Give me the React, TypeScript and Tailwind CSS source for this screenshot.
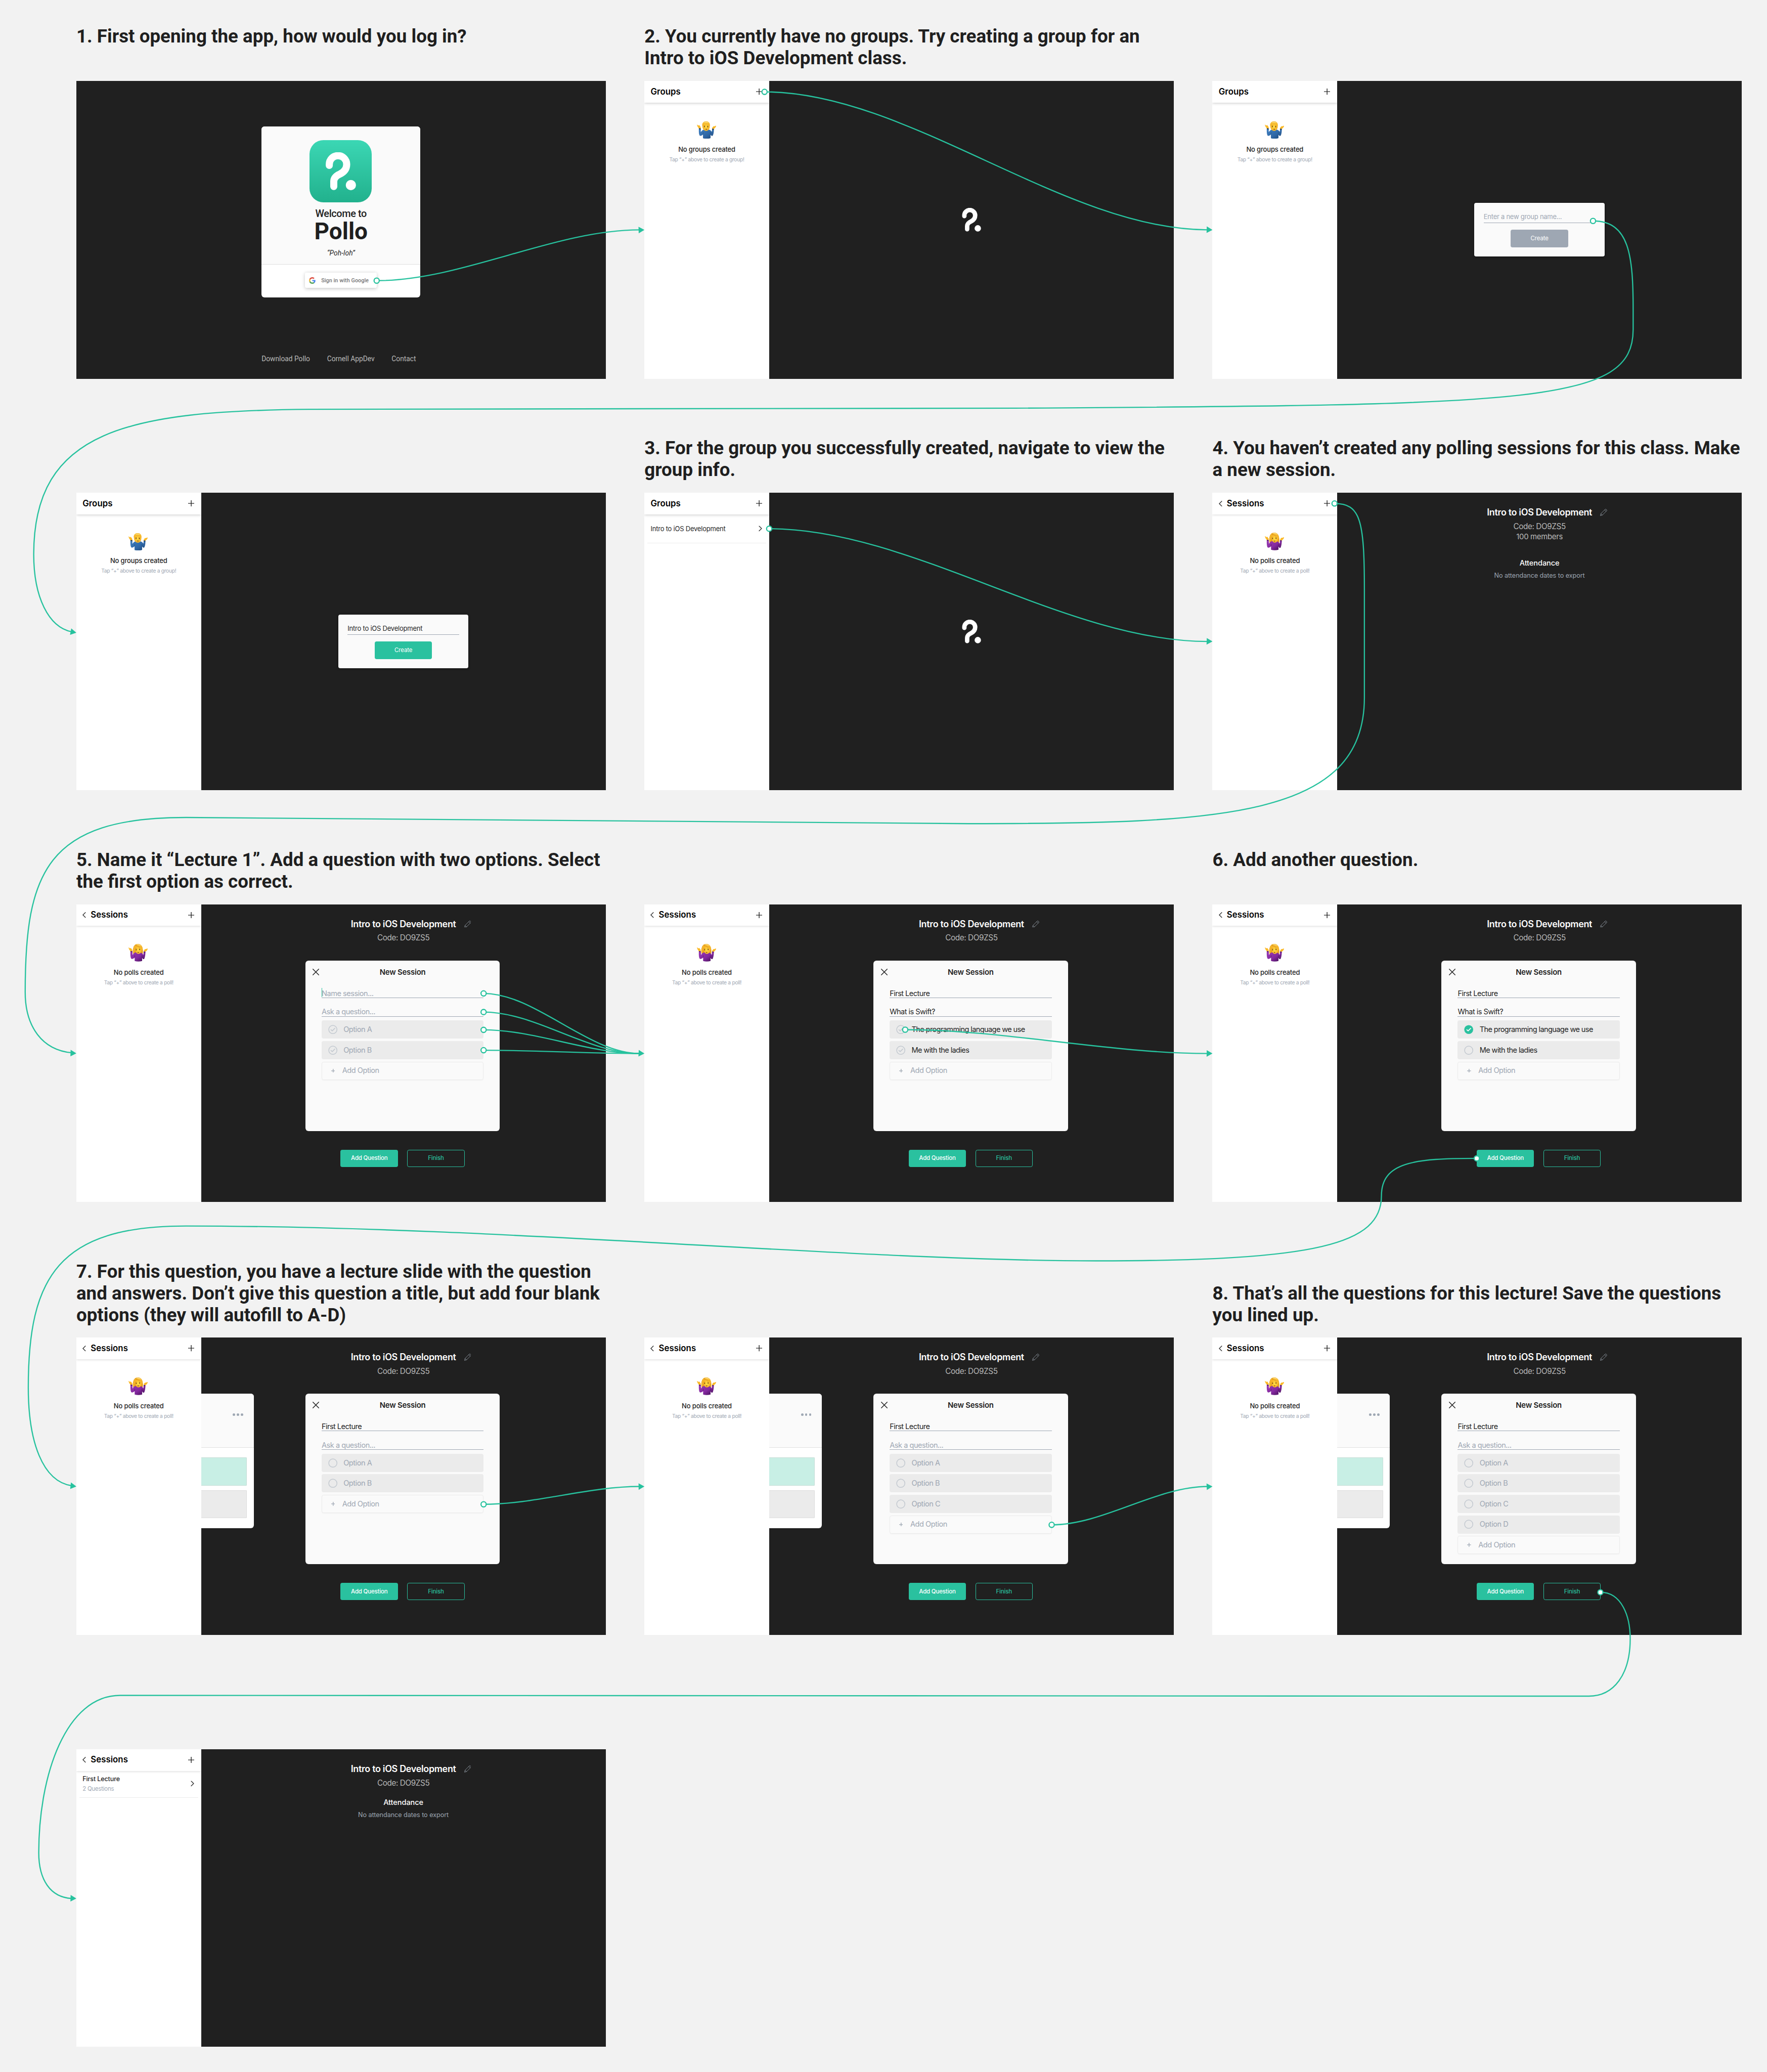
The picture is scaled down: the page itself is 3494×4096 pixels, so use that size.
import React from "react";

/* ---------- icons ---------- */

function PolloMark({ className }: { className: string }) {
  return (
    <svg viewBox="41 31.3 78.4 98" className={className} fill="none">
      <path
        d="M50.3 65.3V62.6A22.4 22.4 0 0 1 95.2 62.3C95.2 76 86.5 83.5 77 87.8C67 92.3 61.9 98.5 61.9 107V119.8"
        stroke="#fff"
        strokeWidth="18.3"
        strokeLinecap="round"
      />
      <circle cx="106" cy="116" r="13.2" fill="#fff" />
    </svg>
  );
}

function GoogleIcon() {
  return (
    <svg viewBox="0 0 48 48" className="h-[17px] w-[17px]">
      <path fill="#DB4C3F" d="M24 9.5c3.54 0 6.71 1.22 9.21 3.6l6.85-6.85C35.9 2.38 30.47 0 24 0 14.62 0 6.51 5.38 2.56 13.22l7.98 6.19C12.43 13.72 17.74 9.5 24 9.5z" />
      <path fill="#4A86EE" d="M46.98 24.55c0-1.57-.15-3.09-.38-4.55H24v9.02h12.94c-.58 2.96-2.26 5.48-4.78 7.18l7.73 6c4.51-4.18 7.09-10.36 7.09-17.65z" />
      <path fill="#F2BE42" d="M10.53 28.59c-.48-1.45-.76-2.99-.76-4.59s.27-3.14.76-4.59l-7.98-6.19C.92 16.46 0 20.12 0 24c0 3.88.92 7.54 2.56 10.78l7.97-6.19z" />
      <path fill="#58A55C" d="M24 48c6.48 0 11.93-2.13 15.89-5.81l-7.73-6c-2.15 1.45-4.92 2.3-8.16 2.3-6.26 0-11.57-4.22-13.47-9.91l-7.98 6.19C6.51 42.62 14.62 48 24 48z" />
    </svg>
  );
}

function Plus({ className }: { className: string }) {
  return (
    <svg viewBox="0 0 16 16" className={className} stroke="currentColor" strokeWidth="1.9">
      <path d="M8 0V16M0 8H16" />
    </svg>
  );
}

function Chevron({ className }: { className: string }) {
  return (
    <svg viewBox="0 0 9 15" className={className} fill="none" stroke="#333" strokeWidth="1.9">
      <path d="M8.2 0.7L1.3 7.5L8.2 14.3" />
    </svg>
  );
}

function Cross() {
  return (
    <svg viewBox="0 0 17 17" className="h-[17px] w-[17px]" stroke="#1f1f1f" strokeWidth="1.9" strokeLinecap="round">
      <path d="M1 1L16 16M16 1L1 16" />
    </svg>
  );
}

function Pencil() {
  return (
    <svg viewBox="0 0 18 18" className="h-[18px] w-[18px]" fill="none" stroke="#9ea7b3" strokeWidth="1" strokeLinejoin="round">
      <path d="M0.6 17.4L2 12.2L13.2 1A1.6 1.6 0 0 1 15.4 1L17 2.6A1.6 1.6 0 0 1 17 4.8L5.8 16Z" />
      <path d="M2 12.2L5.8 16M11.6 2.6L15.4 6.4" />
    </svg>
  );
}

function Radio({ state }: { state: "empty" | "hint" | "on" }) {
  return (
    <svg viewBox="0 0 24 24" className="h-6 w-6" fill="none" strokeLinecap="round" strokeLinejoin="round">
      {state === "on" ? (
        <circle cx="12" cy="12" r="11.5" fill="#2ac19f" />
      ) : (
        <circle cx="12" cy="12" r="10.6" stroke="#c3c9d0" strokeWidth="1.9" />
      )}
      {state !== "empty" && (
        <path d="M7.2 12.6L10.4 15.6L17 9" stroke={state === "on" ? "#fff" : "#c3c9d0"} strokeWidth="2.2" />
      )}
    </svg>
  );
}

function ShrugMan() {
  return (
    <svg viewBox="0 0 150 136" className="h-[45px] w-[50px]">
      <defs>
        <linearGradient id="manShirt" x1="0" x2="1" y1="0" y2="1">
          <stop offset="0" stopColor="#3f80c2" />
          <stop offset="0.6" stopColor="#2f67a5" />
          <stop offset="1" stopColor="#1c4676" />
        </linearGradient>
        <radialGradient id="manFace" cx="0.5" cy="0.55" r="0.6">
          <stop offset="0" stopColor="#ffdc45" />
          <stop offset="1" stopColor="#f2a51c" />
        </radialGradient>
      </defs>
      <path d="M0 26C4 25 8 31 12 34C13 30 15 28 18 29L25 38C30 43 31 48 29 55L17 56C8 48 2 38 0 26Z" fill="#fbb927" />
      <path d="M150 35C146 34 139 36 135 39C133 36 128 38 125 42C119 47 118 52 119 57L131 59C141 53 148 45 150 35Z" fill="#fbb927" />
      <path d="M15 55L30 56L30 84C36 73 44 66 55 64H92C103 66 110 72 116 82L119 57L132 60C132 80 130 98 124 109C120 116 112 114 106 104V130Q76 140 47 131V102C38 112 28 116 21 110C14 98 14 75 15 55Z" fill="url(#manShirt)" />
      <path d="M47 102L49 84M106 104L104 84" stroke="#1d4472" strokeWidth="2" fill="none" />
      <path d="M15 53L30 55V62L15 60ZM119 56L132 58L131 65L118 63Z" fill="#24364c" />
      <path d="M42 36C42 12 52 1 71 1C91 1 101 12 100 38C100 60 88 74 72 74C55 74 42 58 42 36Z" fill="url(#manFace)" />
      <path d="M41 34C38 12 52 0 71 0C92 0 105 13 100 38C97 32 97 27 94 22C80 28 60 28 49 22C45 25 44 30 41 34Z" fill="#f6bb30" />
      <path d="M50 12C60 4 84 3 93 13C80 9 62 9 50 12Z" fill="#fff0a0" />
      <path d="M54 35L64 33M79 34L89 37" stroke="#a8640d" strokeWidth="3" />
      <ellipse cx="59" cy="41" rx="3.4" ry="4.6" fill="#4b2a0c" />
      <ellipse cx="84" cy="42" rx="3.4" ry="4.6" fill="#4b2a0c" />
      <path d="M64 60Q73 55 81 61Q73 66 64 60Z" fill="#5a240c" />
    </svg>
  );
}

function ShrugWoman() {
  return (
    <svg viewBox="0 0 150 139" className="h-[46px] w-[50px]">
      <defs>
        <linearGradient id="womanShirt" x1="0" x2="1" y1="0" y2="1">
          <stop offset="0" stopColor="#9a3bb4" />
          <stop offset="0.55" stopColor="#84299f" />
          <stop offset="1" stopColor="#3a0b4c" />
        </linearGradient>
        <radialGradient id="womanFace" cx="0.5" cy="0.55" r="0.6">
          <stop offset="0" stopColor="#ffdc45" />
          <stop offset="1" stopColor="#f6ae22" />
        </radialGradient>
      </defs>
      <path d="M36 76C30 50 34 0 72 0C110 0 116 46 111 76L96 84H50Z" fill="#e59e1e" />
      <path d="M0 28C4 27 8 33 12 36C13 32 15 31 18 32L25 40C30 45 31 50 29 57L17 59C8 50 2 40 0 28Z" fill="#fbb927" />
      <path d="M150 37C146 36 139 38 135 41C133 38 128 40 125 44C119 49 118 54 119 59L131 61C141 55 148 47 150 37Z" fill="#fbb927" />
      <path d="M15 57L30 58L32 88C36 76 44 68 55 66H92C103 68 110 76 116 86L118 60L132 62C132 84 128 104 123 115C118 122 111 118 106 108V133Q76 142 48 133V106C40 116 28 121 20 113C14 100 14 77 15 57Z" fill="url(#womanShirt)" />
      <path d="M48 106L49 88M106 108L104 88" stroke="#430c58" strokeWidth="2" fill="none" />
      <path d="M15 56L30 58V64L15 62ZM118 59L132 61L131 67L118 65Z" fill="#4a1660" />
      <path d="M52 40C52 18 58 10 76 10C94 10 103 22 103 44C103 64 92 77 78 77C62 77 52 60 52 40Z" fill="url(#womanFace)" />
      <path d="M37 72C34 34 40 1 73 1C104 1 113 26 110 58C106 38 92 28 77 22C70 18 62 12 54 7C60 24 50 30 49 44C48 58 46 70 37 72Z" fill="#f5b52c" />
      <path d="M58 4C74 0 94 6 101 18C88 10 72 8 58 4Z" fill="#ffeb95" />
      <path d="M54 7C60 14 74 21 88 28" stroke="#b87412" strokeWidth="2" fill="none" />
      <ellipse cx="60" cy="46" rx="3.4" ry="4.6" fill="#4b2a0c" />
      <ellipse cx="87" cy="44" rx="3.4" ry="4.6" fill="#4b2a0c" />
      <path d="M55 38L64 36M81 35L91 37" stroke="#b06f10" strokeWidth="2.6" />
      <path d="M68 66Q76 60 83 65Q76 71 68 66Z" fill="#5a240c" />
    </svg>
  );
}

/* ---------- sidebar ---------- */

type SidebarKind = "groups-empty" | "groups-list" | "polls-empty" | "polls-list";

function Sidebar({ kind }: { kind: SidebarKind }) {
  const groups = kind === "groups-empty" || kind === "groups-list";
  return (
    <aside className="flex w-[322px] shrink-0 flex-col overflow-hidden bg-white">
      <header
        className={
          groups
            ? "flex h-14 shrink-0 items-center justify-between pr-[18px] pl-4 shadow-[0_1px_8px_rgba(0,0,0,0.28)]"
            : "flex h-14 shrink-0 items-center justify-between pr-[18px] pl-4 shadow-[0_1px_6px_rgba(0,0,0,0.15)]"
        }
      >
        <div className="flex items-center gap-3">
          {!groups && <Chevron className="h-[15px] w-[9px]" />}
          <h2 className="text-[22px] leading-7 font-semibold text-black">{groups ? "Groups" : "Sessions"}</h2>
        </div>
        <Plus className="h-4 w-4 text-[#2b2b2b]" />
      </header>

      {(kind === "groups-empty" || kind === "polls-empty") && (
        <div className="flex flex-col items-center pt-[47px]">
          <div className="flex h-[46px] items-end pr-[2px]">{groups ? <ShrugMan /> : <ShrugWoman />}</div>
          <p className="mt-[15px] text-[17px] leading-6 font-medium tracking-[-0.22px] text-[#1f1f1f]">
            {groups ? "No groups created" : "No polls created"}
          </p>
          <p className="mt-[6px] text-[13.5px] leading-[18px] tracking-[-0.44px] text-[#9ea7b3]">
            {groups ? "Tap “+” above to create a group!" : "Tap “+” above to create a poll!"}
          </p>
        </div>
      )}

      {kind === "groups-list" && (
        <div className="mx-2 flex h-[75px] items-center justify-between border-b border-[#ebebeb] pr-[10px] pl-2">
          <p className="text-[17px] leading-6 tracking-[-0.3px] text-[#1f1f1f]">Intro to iOS Development</p>
          <Chevron className="h-[15px] w-[9px] rotate-180" />
        </div>
      )}

      {kind === "polls-list" && (
        <div className="mx-2 flex h-[70px] justify-between border-b border-[#ebebeb] pr-[10px] pl-2">
          <div className="pt-[10px]">
            <p className="text-[16.5px] leading-6 font-medium tracking-[-0.2px] text-[#1f1f1f]">First Lecture</p>
            <p className="mt-[3px] text-[15px] leading-5 tracking-[-0.33px] text-[#9ea7b3]">2 Questions</p>
          </div>
          <Chevron className="mt-[25px] h-[15px] w-[9px] rotate-180" />
        </div>
      )}
    </aside>
  );
}

/* ---------- main panes ---------- */

function GroupHeading({ members }: { members?: boolean }) {
  return (
    <div className="flex w-full flex-col items-center pt-[37px]">
      <div className="relative">
        <h3 className="text-[23.5px] leading-[30px] font-semibold tracking-[-0.46px] text-white">Intro to iOS Development</h3>
        <span className="absolute top-[5px] -right-[39px]">
          <Pencil />
        </span>
      </div>
      <p className="mt-[6px] text-[20px] leading-7 tracking-[-0.55px] text-[#b9b9b9]">Code: DO9ZS5</p>
      {members && <p className="text-[19.5px] leading-7 tracking-[-0.44px] text-[#b9b9b9]">100 members</p>}
    </div>
  );
}

function Attendance({ className }: { className: string }) {
  return (
    <div className={className}>
      <p className="text-[19px] leading-6 font-medium tracking-[-0.1px] text-white">Attendance</p>
      <p className="mt-2 text-[16.5px] leading-6 tracking-[-0.07px] text-[#9ea7b3]">No attendance dates to export</p>
    </div>
  );
}

function CreateGroup({ name }: { name?: string }) {
  return (
    <div className="flex h-[138px] w-[336px] flex-col items-center rounded-[5px] bg-[#fafafa] px-6 pt-[20px] shadow-[0_1px_6px_rgba(0,0,0,0.5)]">
      <div className="h-[32px] w-full border-b border-[#9ea7b3]">
        {name ? (
          <p className="text-[17px] leading-[30px] tracking-[-0.3px] text-[#1f1f1f]">{name}</p>
        ) : (
          <p className="text-[17px] leading-[30px] tracking-[-0.35px] text-[#9ea7b3]">Enter a new group name...</p>
        )}
      </div>
      <div
        className={
          name
            ? "mt-[17px] flex h-[45px] w-[148px] items-center justify-center rounded-[5px] bg-[#2ac19f] text-[15px] tracking-[-0.15px] text-white"
            : "mt-[17px] flex h-[45px] w-[148px] items-center justify-center rounded-[5px] bg-[#9ea7b3] text-[15px] tracking-[-0.15px] text-white"
        }
      >
        Create
      </div>
    </div>
  );
}

type Option = { text: string; filled?: boolean; radio: "empty" | "hint" | "on" };

function Field({ value, placeholder, caret, className }: { value?: string; placeholder: string; caret?: boolean; className: string }) {
  return (
    <div className={className}>
      {caret && <span className="absolute -top-[2px] left-0 h-[24px] w-[2px] bg-[#2ac19f]" />}
      {value ? (
        <p className="text-[19px] leading-[24px] tracking-[-0.7px] text-[#1f1f1f]">{value}</p>
      ) : (
        <p className="text-[19px] leading-[24px] tracking-[-0.6px] text-[#9ea7b3]">{placeholder}</p>
      )}
    </div>
  );
}

function SessionCard({ session, question, caret, options }: { session?: string; question?: string; caret?: boolean; options: Option[] }) {
  return (
    <section className="flex h-[440px] w-[502px] shrink-0 flex-col rounded-lg bg-[#fafafa]">
      <div className="grid h-[60px] grid-cols-[60px_1fr_60px] items-center">
        <span className="pl-[19px]">
          <Cross />
        </span>
        <h4 className="pt-[1px] text-center text-[19.5px] leading-6 font-semibold tracking-[-0.3px] text-[#1f1f1f]">New Session</h4>
      </div>
      <div className="flex flex-col px-[42px] pt-[13px]">
        <Field value={session} placeholder="Name session..." caret={caret} className="relative h-[24px] border-b border-[#9ea7b3]" />
        <Field value={question} placeholder="Ask a question..." className="relative mt-6 h-[24px] border-b border-[#9ea7b3]" />
        <div className="mt-[10px] flex flex-col gap-[6px]">
          {options.map((o) => (
            <div key={o.text} className="flex h-[47px] items-center gap-[16px] rounded-[5px] bg-[#ebebeb] pl-[16.5px]">
              <Radio state={o.radio} />
              <p className={o.filled ? "text-[19px] leading-6 tracking-[-0.8px] text-[#1f1f1f]" : "text-[19px] leading-6 tracking-[-0.6px] text-[#9ea7b3]"}>
                {o.text}
              </p>
            </div>
          ))}
          <div className="flex h-[47px] items-center gap-[19px] rounded-[5px] border border-[#ebebeb] pl-[23px] shadow-[0_1px_2px_rgba(0,0,0,0.04)]">
            <Plus className="h-[10px] w-[10px] text-[#9ea7b3] stroke-[2.8]" />
            <p className="text-[19px] leading-6 tracking-[-0.6px] text-[#9ea7b3]">Add Option</p>
          </div>
        </div>
      </div>
    </section>
  );
}

function PreviousQuestion() {
  return (
    <section className="mr-[133px] h-[347px] w-[136px] overflow-hidden rounded-r-lg bg-white">
      <div className="flex h-[139px] justify-end gap-[4px] border-b border-[#dfdfdf] bg-[#fafafa] pt-[51px] pr-[27px]">
        <span className="h-[6.4px] w-[6.4px] rounded-full bg-[#9ea7b3]" />
        <span className="h-[6.4px] w-[6.4px] rounded-full bg-[#9ea7b3]" />
        <span className="h-[6.4px] w-[6.4px] rounded-full bg-[#9ea7b3]" />
      </div>
      <div className="flex flex-col gap-[12px] pt-[26px] pr-[18px]">
        <div className="h-[72px] rounded-r-[2px] border border-l-0 border-[#c6ddd6] bg-[#c8efe5]" />
        <div className="h-[72px] rounded-r-[2px] border border-l-0 border-[#dcdcdc] bg-[#ebebeb]" />
      </div>
    </section>
  );
}

function SessionPane({ previous, ...card }: { previous?: boolean; session?: string; question?: string; caret?: boolean; options: Option[] }) {
  return (
    <main className="flex w-[1044px] flex-col bg-[#202020]">
      <GroupHeading />
      <div className={previous ? "mt-[44px] flex h-[440px] items-start" : "mt-[44px] flex h-[440px] items-start pl-[269px]"}>
        {previous && <PreviousQuestion />}
        <SessionCard {...card} />
      </div>
      <div className="mt-12 flex gap-6 pl-[360px] text-[15px] font-medium tracking-[-0.25px]">
        <div className="flex h-[45px] w-[148px] items-center justify-center rounded-[5px] bg-[#2ac19f] text-white">Add Question</div>
        <div className="flex h-[45px] w-[148px] items-center justify-center rounded-[5px] border-[1.5px] border-[#2ac19f] text-[#2ac19f]">Finish</div>
      </div>
    </main>
  );
}

function CenteredPane({ children }: { children: React.ReactNode }) {
  return <main className="flex w-[1044px] items-center justify-center bg-[#202020]">{children}</main>;
}

function Login() {
  return (
    <main className="flex w-full flex-col bg-[#202020] font-['Roboto',sans-serif]">
      <section className="mt-[117px] ml-[478px] flex h-[441px] w-[410px] flex-col overflow-hidden rounded-lg bg-white">
        <div className="flex h-[356px] flex-col items-center border-b border-[#dedede] bg-[#fafafa] pt-[36px] text-[#1f1f1f]">
          <div className="mr-[2px] flex h-[160px] w-[160px] shrink-0 rounded-[36px] bg-linear-to-b from-[#3bd7b4] to-[#21b18d] pt-[31.3px] pl-[41px]">
            <PolloMark className="h-[98px] w-[78.4px]" />
          </div>
          <p className="mt-[15px] text-[26px] leading-[30px] font-medium tracking-[-0.5px]">Welcome to</p>
          <h1 className="text-[60px] leading-[62px] font-bold">Pollo</h1>
          <p className="mt-[12px] text-[18px] leading-6 tracking-[0.15px] italic">“Poh-loh”</p>
        </div>
        <div className="flex justify-center pt-[22px]">
          <div className="flex h-[39px] w-[185px] items-center gap-[14.5px] rounded-[4px] bg-white pl-[10px] shadow-[0_2px_10px_rgba(0,0,0,0.22)]">
            <GoogleIcon />
            <span className="text-[14px] leading-5 font-medium tracking-[0.12px] whitespace-nowrap text-[#757575]">Sign in with Google</span>
          </div>
        </div>
      </section>
      <footer className="mt-[147px] flex gap-[44px] pl-[478px] text-[18px] leading-6 text-[#bababa]">
        <span>Download Pollo</span>
        <span>Cornell AppDev</span>
        <span>Contact</span>
      </footer>
    </main>
  );
}

/* ---------- storyboard ---------- */

function Step({ lines, className, children }: { lines?: string[]; className: string; children: React.ReactNode }) {
  return (
    <article className="flex w-[1366px] flex-col justify-end">
      <div className={className}>
        {lines && (
          <h2 className="relative top-px min-h-[112px] font-['Roboto',sans-serif] text-[48px] leading-[56.25px] font-bold whitespace-nowrap text-[#1f1f1f]">
            {lines.map((l) => (
              <span key={l} className="block">
                {l}
              </span>
            ))}
          </h2>
        )}
      </div>
      <div className="flex h-[768px] w-[1366px] overflow-hidden">{children}</div>
    </article>
  );
}

const blank = (letters: string[], radio: "empty" | "hint" = "empty"): Option[] => letters.map((l) => ({ text: `Option ${l}`, radio }));

/* ---------- connectors ---------- */

const easy = (x1: number, y1: number, x2: number, y2: number) => {
  const h = (x2 - x1) * 0.32;
  return `M${x1} ${y1}C${x1 + h} ${y1} ${x2 - 12 - h} ${y2} ${x2 - 12} ${y2}`;
};

const paths = [
  easy(972, 724, 1663, 593),
  easy(1973, 237, 3129, 593),
  "M4111 570C4205 570 4214.6 660 4214.6 800V850C4214.6 1040 3960 1045 2620 1053C2000 1056 1400 1056 800 1056C330 1060 87 1110 87 1430C87 1540 125 1618 185 1630",
  easy(1985, 1364, 3129, 1655),
  "M3444 1299C3510 1299 3521 1340 3521 1520V1800C3521 2110 3150 2125 2500 2125C1800 2125 1100 2109 480 2109C120 2109 65 2250 65 2560C65 2650 110 2709 185 2716",
  easy(1248, 2563, 1663, 2718),
  easy(1248, 2611, 1663, 2718),
  easy(1248, 2657, 1663, 2718),
  easy(1248, 2709.5, 1663, 2718),
  easy(2336, 2656.5, 3129, 2718),
  "M3811 2988.5C3650 2988.5 3565 2998 3565 3085C3565 3210 3400 3253 2830 3253C2200 3253 1300 3163 480 3163C150 3163 73 3295 73 3580C73 3720 110 3822 185 3833",
  easy(1248, 3881, 1663, 3835),
  easy(2714, 3934, 3129, 3835),
  "M4130 4108C4185 4108 4207 4170 4207 4228C4207 4320 4165 4376 4100 4376L310 4374C170 4374 100 4580 100 4780C100 4850 130 4895 185 4898",
];

const nodes = [
  [972, 724], [1973, 237], [4111, 570], [1985, 1364], [3444, 1299], [1248, 2563], [1248, 2611], [1248, 2657],
  [1248, 2709.5], [2336, 2656.5], [3811, 2988.5], [1248, 3881], [2714, 3934], [4130, 4108],
];

const arrows = [
  [1663, 593, -2], [3129, 593, 2], [197, 1632.5, 11], [3129, 1655, 2], [197, 2717.5, 2], [1663, 2718, 3],
  [3129, 2718, 1], [197, 3835, 7], [1663, 3835, -1], [3129, 3835, -3], [197, 4898, 2],
];

function Connectors() {
  return (
    <svg viewBox="0 0 4560 5346" className="pointer-events-none absolute top-0 left-0 h-[5346px] w-[4560px]" fill="none">
      {paths.map((d) => (
        <path key={d} d={d} stroke="#27c29e" strokeWidth="3.1" />
      ))}
      {arrows.map(([x, y, a]) => (
        <path key={`${x}-${y}`} d="M0 0L-15 -8.5V8.5Z" fill="#27c29e" transform={`translate(${x} ${y}) rotate(${a})`} />
      ))}
      {nodes.map(([x, y]) => (
        <circle key={`${x}-${y}`} cx={x} cy={y} r="6.7" fill="#fff" stroke="#27c29e" strokeWidth="3" />
      ))}
    </svg>
  );
}

export default function App() {
  const swift = { session: "First Lecture", question: "What is Swift?" };
  return (
    <div className="h-screen w-full overflow-hidden bg-[#f2f2f2]">
      <div className="relative flex h-[5346px] w-[4560px] flex-col pt-[64px] pl-[197px] font-['Inter',sans-serif] [zoom:0.76623]">
        <div className="flex gap-[100px]">
          <Step className="h-[145px]" lines={["1. First opening the app, how would you log in?"]}>
            <Login />
          </Step>
          <Step className="h-[145px]" lines={["2. You currently have no groups. Try creating a group for an", "Intro to iOS Development class."]}>
            <Sidebar kind="groups-empty" />
            <CenteredPane>
              <PolloMark className="mb-[51px] h-[61px] w-[50px]" />
            </CenteredPane>
          </Step>
          <Step className="h-[145px]">
            <Sidebar kind="groups-empty" />
            <CenteredPane>
              <CreateGroup />
            </CenteredPane>
          </Step>
        </div>

        <div className="mt-[149px] flex gap-[100px]">
          <Step className="h-[145px]">
            <Sidebar kind="groups-empty" />
            <CenteredPane>
              <CreateGroup name="Intro to iOS Development" />
            </CenteredPane>
          </Step>
          <Step className="h-[145px]" lines={["3. For the group you successfully created, navigate to view the", "group info."]}>
            <Sidebar kind="groups-list" />
            <CenteredPane>
              <PolloMark className="mb-[51px] h-[61px] w-[50px]" />
            </CenteredPane>
          </Step>
          <Step className="h-[145px]" lines={["4. You haven’t created any polling sessions for this class. Make", "a new session."]}>
            <Sidebar kind="polls-empty" />
            <main className="w-[1044px] bg-[#202020]">
              <GroupHeading members />
              <Attendance className="mt-[41px] text-center" />
            </main>
          </Step>
        </div>

        <div className="mt-[150px] flex gap-[100px]">
          <Step className="h-[144px]" lines={["5. Name it “Lecture 1”. Add a question with two options. Select", "the first option as correct."]}>
            <Sidebar kind="polls-empty" />
            <SessionPane caret options={blank(["A", "B"], "hint")} />
          </Step>
          <Step className="h-[144px]">
            <Sidebar kind="polls-empty" />
            <SessionPane
              {...swift}
              options={[
                { text: "The programming language we use", filled: true, radio: "hint" },
                { text: "Me with the ladies", filled: true, radio: "hint" },
              ]}
            />
          </Step>
          <Step className="h-[144px]" lines={["6. Add another question."]}>
            <Sidebar kind="polls-empty" />
            <SessionPane
              {...swift}
              options={[
                { text: "The programming language we use", filled: true, radio: "on" },
                { text: "Me with the ladies", filled: true, radio: "empty" },
              ]}
            />
          </Step>
        </div>

        <div className="mt-[150px] flex gap-[100px]">
          <Step
            className="pb-[31px]"
            lines={["7. For this question, you have a lecture slide with the question", "and answers. Don’t give this question a title, but add four blank", "options (they will autofill to A-D)"]}
          >
            <Sidebar kind="polls-empty" />
            <SessionPane previous session="First Lecture" options={blank(["A", "B"])} />
          </Step>
          <Step className="pb-[31px]">
            <Sidebar kind="polls-empty" />
            <SessionPane previous session="First Lecture" options={blank(["A", "B", "C"])} />
          </Step>
          <Step className="pb-[31px]" lines={["8. That’s all the questions for this lecture! Save the questions", "you lined up."]}>
            <Sidebar kind="polls-empty" />
            <SessionPane previous session="First Lecture" options={blank(["A", "B", "C", "D"])} />
          </Step>
        </div>

        <div className="mt-[294px] flex">
          <Step className="h-0">
            <Sidebar kind="polls-list" />
            <main className="w-[1044px] bg-[#202020]">
              <GroupHeading />
              <Attendance className="mt-[25px] text-center" />
            </main>
          </Step>
        </div>
        <Connectors />
      </div>
    </div>
  );
}
